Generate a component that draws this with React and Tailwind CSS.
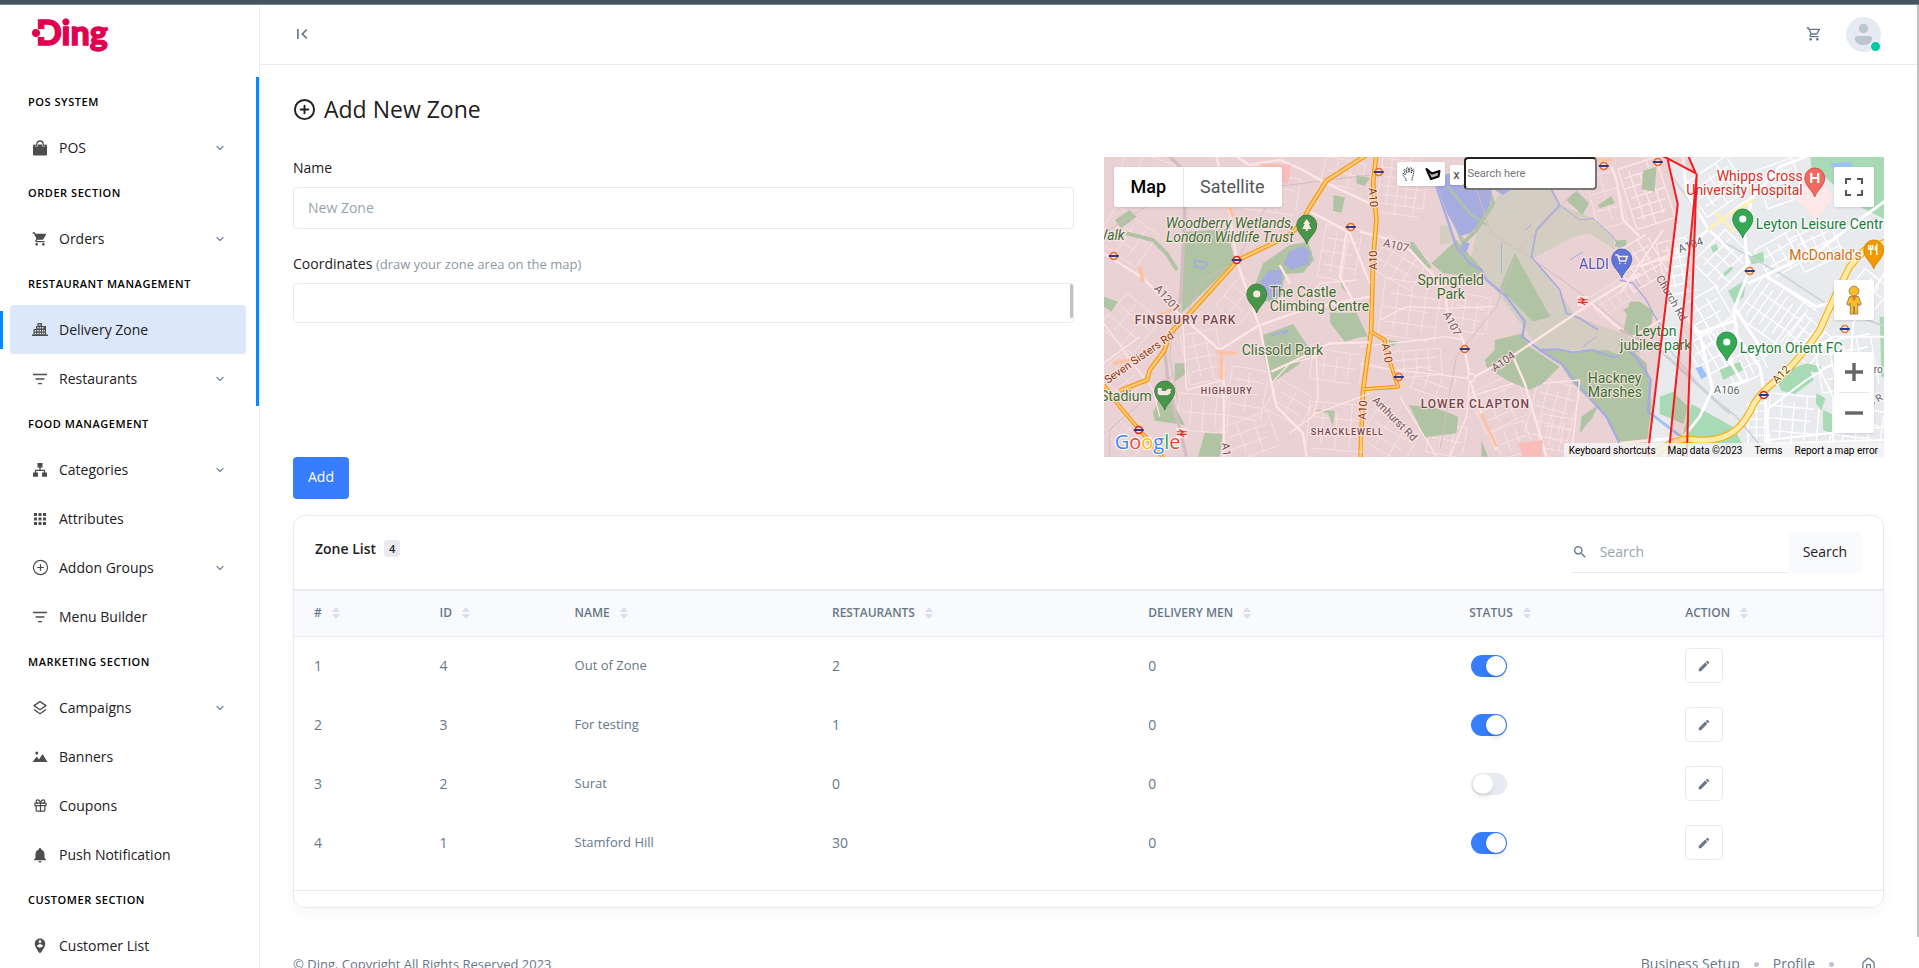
import React from "react";
import { ChevronDown, CirclePlus, Gift, House } from "lucide-react";
import {
  MdApps,
  MdEdit,
  MdFirstPage,
  MdNotifications,
  MdOutlineShoppingCart,
  MdPersonPinCircle,
  MdSearch,
  MdShoppingCart,
} from "react-icons/md";

/* ---------- small drawn icons ---------- */

function CityIcon() {
  return (
    <svg viewBox="0 0 16 16" className="size-4" fill="currentColor">
      <path
        fillRule="evenodd"
        d="M5.500 1h4.500v3h4v8.500h2V14H0v-1.500h1.500V7H4V4h1.500zM6.700 2.200v1.300h2V2.200zM5.200 5v1.500h1.400V5zm2.400 0v1.500H9V5zm2.400 0v1.500h1.400V5zM2.700 8v1.500h1.400V8zm2.500 0v1.500h1.400V8zm2.400 0v1.500H9V8zM10 8v1.500h1.400V8zm2.200 0v1.500h.8V8zM2.700 10.700v1.500h1.400v-1.500zm2.500 0v1.500h1.400v-1.500zm2.400 0v1.500H9v-1.500zm2.400 0v1.500h1.400v-1.500zm2.200 0v1.500h.8v-1.500z"
      />
    </svg>
  );
}

function BagIcon() {
  return (
    <svg viewBox="0 0 16 16" className="size-4">
      <rect x="1" y="4.500" width="14" height="11" rx="1.300" fill="currentColor" />
      <path d="M4.800 7V4.200a3.200 3.200 0 0 1 6.400 0V7" fill="none" stroke="#fff" strokeWidth="2.400" />
      <path d="M4.800 7.500V4.200a3.200 3.200 0 0 1 6.400 0v3.300" fill="none" stroke="currentColor" strokeWidth="1.300" />
    </svg>
  );
}

function TreeIcon() {
  return (
    <svg viewBox="0 0 16 16" className="size-4" fill="currentColor">
      <path d="M5.500 1h5v4.600h-5zM1 10.500h5v4.300H1zM10 10.500h5v4.300h-5z" />
      <path d="M8 5v3M3.500 11V8.300h9V11" fill="none" stroke="currentColor" strokeWidth="1.300" />
    </svg>
  );
}

function LinesIcon() {
  return (
    <svg viewBox="0 0 16 16" className="size-4" stroke="currentColor" strokeWidth="1.300" strokeLinecap="round">
      <path d="M1.500 3.500h13M4 8h8M6.500 12.700h3" />
    </svg>
  );
}

function LayersIcon() {
  return (
    <svg viewBox="0 0 16 16" className="size-4" fill="none" stroke="currentColor" strokeWidth="1.300" strokeLinejoin="round">
      <path d="M8 1.600l6 4-6 4.200-6-4.200z" />
      <path d="M2 9.400l6 4.400 6-4.400" />
    </svg>
  );
}

function MountainsIcon() {
  return (
    <svg viewBox="0 0 16 16" className="size-4" fill="currentColor">
      <circle cx="4.800" cy="4" r="1.500" />
      <path d="M.5 13L4.700 7.500 7 10.400 10.500 5 15.500 13z" />
    </svg>
  );
}

function SortIcon() {
  return (
    <svg viewBox="0 0 8 12" className="h-3 w-2" fill="#dde0ec">
      <path d="M4 .5c.7 0 4 3.800 3.700 4.600H.3C0 4.300 3.300.5 4 .5zM4 11.500c.7 0 4-3.800 3.700-4.600H.3c-.3.800 3 4.600 3.700 4.600z" />
    </svg>
  );
}

function Logo() {
  return (
    <svg viewBox="0 0 78 44" className="h-11 w-[78px] overflow-visible" role="img" aria-label="Ding">
      <text x="4" y="28" fontFamily="Lato" fontWeight="900" fontSize="34" fill="#e10050" stroke="#e10050" strokeWidth="1.300">
        Ding
      </text>
      <rect x="2" y="12" width="15" height="8" rx="4" fill="#fff" />
      <circle cx="4" cy="16" r="4" fill="#e10050" />
    </svg>
  );
}

/* ---------- sidebar ---------- */

const sections = [
  { title: "Pos System", items: [{ label: "POS", icon: <BagIcon />, more: true }] },
  { title: "Order Section", items: [{ label: "Orders", icon: <MdShoppingCart />, more: true }] },
  {
    title: "Restaurant Management",
    items: [
      { label: "Delivery Zone", icon: <CityIcon />, active: true },
      { label: "Restaurants", icon: <LinesIcon />, more: true },
    ],
  },
  {
    title: "Food Management",
    items: [
      { label: "Categories", icon: <TreeIcon />, more: true },
      { label: "Attributes", icon: <MdApps className="size-[18px]" /> },
      { label: "Addon Groups", icon: <CirclePlus size={17} strokeWidth={1.7} />, more: true },
      { label: "Menu Builder", icon: <LinesIcon /> },
    ],
  },
  {
    title: "Marketing Section",
    items: [
      { label: "Campaigns", icon: <LayersIcon />, more: true },
      { label: "Banners", icon: <MountainsIcon /> },
      { label: "Coupons", icon: <Gift size={15} strokeWidth={2} /> },
      { label: "Push Notification", icon: <MdNotifications className="size-[18px]" /> },
    ],
  },
  { title: "Customer Section", items: [{ label: "Customer List", icon: <MdPersonPinCircle className="size-[18px]" /> }] },
];

function Sidebar() {
  return (
    <aside className="relative flex w-[260px] shrink-0 flex-col overflow-hidden border-r border-[#e7eaf3] bg-white">
      <a href="#home" className="flex h-[76px] shrink-0 items-start pt-3 pl-8">
        <Logo />
      </a>
      <nav className="text-sm text-[#1e2022]">
        {sections.map((s) => (
          <section key={s.title}>
            <h2 className="flex h-[42px] items-center pl-7 text-[11px] font-semibold tracking-wider text-black uppercase">
              {s.title}
            </h2>
            {s.items.map((it) => (
              <div key={it.label} className="relative">
                {it.active && <span className="absolute top-1.5 left-0 h-[38px] w-[3px] bg-[#008cff]" />}
                <a
                  href="#nav"
                  className={
                    it.active
                      ? "mr-[13px] ml-2.5 flex h-[49px] items-center rounded bg-[#dce8fa] pr-[18px] pl-[21px]"
                      : "mr-[13px] ml-2.5 flex h-[49px] items-center rounded pr-[18px] pl-[21px]"
                  }
                >
                  <span className="mr-2.5 flex w-[18px] justify-center text-base text-[#4d4d4d]">{it.icon}</span>
                  <span className="grow">{it.label}</span>
                  {it.more && <ChevronDown size={12} strokeWidth={2.600} className="mr-[2px] text-[#7b8ba1]" />}
                </a>
              </div>
            ))}
          </section>
        ))}
      </nav>
      <span className="absolute top-[72px] right-0 h-[329px] w-[3px] bg-[#008cff]" />
    </aside>
  );
}

/* ---------- map ---------- */

// Street texture: a rotated grid of w × h around (cx, cy).
function grid(cx, cy, w, h, deg, nx, ny) {
  const a = (deg * Math.PI) / 180;
  const p = (x, y) =>
    `${Math.round(cx + x * Math.cos(a) - y * Math.sin(a))},${Math.round(cy + x * Math.sin(a) + y * Math.cos(a))}`;
  let d = "";
  for (let i = 0; i <= nx; i++) {
    const x = -w / 2 + (w * i) / nx;
    d += `M${p(x, -h / 2 + (i % 3) * h * 0.08)}L${p(x, h / 2 - (i % 2) * h * 0.12)}`;
  }
  for (let j = 0; j <= ny; j++) {
    const y = -h / 2 + (h * j) / ny;
    d += `M${p(-w / 2 + (j % 2) * w * 0.1, y)}L${p(w / 2 - (j % 3) * w * 0.08, y)}`;
  }
  return d;
}

const streetsWest = [
  grid(110, 260, 150, 120, 35, 4, 3),
  grid(190, 80, 200, 110, 20, 4, 2),
  grid(120, 520, 130, 130, 40, 3, 3),
  grid(100, 680, 110, 90, 50, 3, 2),
  grid(340, 620, 110, 150, -12, 3, 4),
  grid(340, 790, 150, 110, 5, 4, 2),
  grid(470, 730, 110, 150, 10, 2, 4),
  grid(480, 860, 150, 110, -20, 3, 3),
  grid(600, 760, 100, 120, -60, 3, 2),
  grid(740, 650, 150, 90, 8, 4, 2),
  grid(740, 830, 170, 140, 5, 4, 3),
  grid(750, 310, 110, 160, 10, 3, 4),
  grid(540, 130, 170, 110, 8, 3, 3),
  grid(450, 450, 90, 120, 40, 2, 3),
  grid(760, 70, 120, 80, 12, 3, 2),
  grid(120, 860, 100, 90, 45, 3, 3),
].join("");

const streetsMid = [
  grid(130, 100, 140, 190, 8, 5, 7),
  grid(120, 340, 140, 110, 30, 4, 3),
  grid(150, 480, 170, 170, 8, 4, 4),
  grid(330, 490, 110, 110, 10, 3, 3),
  grid(170, 640, 150, 80, -5, 4, 3),
  grid(220, 700, 120, 70, 20, 3, 2),
  grid(90, 860, 150, 100, 30, 3, 3),
  grid(260, 870, 110, 90, 10, 3, 2),
  grid(420, 760, 150, 130, -25, 3, 4),
  grid(580, 780, 130, 170, 15, 4, 4),
  grid(460, 870, 100, 90, -20, 3, 2),
  grid(760, 440, 130, 70, -32, 5, 2),
  grid(740, 150, 90, 160, -15, 2, 3),
  grid(590, 850, 100, 100, 10, 3, 3),
].join("");

const streetsEast = [
  grid(80, 130, 120, 190, -18, 4, 6),
  grid(60, 340, 120, 130, -30, 4, 4),
  grid(170, 350, 90, 160, -12, 3, 6),
  grid(290, 110, 150, 120, -35, 4, 4),
  grid(310, 330, 120, 140, 45, 4, 4),
  grid(480, 100, 120, 120, -20, 3, 4),
  grid(490, 310, 140, 100, -30, 4, 3),
  grid(470, 490, 190, 150, 35, 8, 3),
  grid(270, 500, 140, 120, 60, 4, 3),
  grid(270, 610, 100, 110, -30, 4, 3),
  grid(380, 650, 110, 80, -25, 5, 2),
  grid(560, 570, 110, 110, 40, 4, 3),
  grid(520, 810, 150, 150, 5, 4, 4),
  grid(680, 640, 170, 150, -10, 4, 4),
  grid(710, 840, 150, 130, 8, 4, 3),
  grid(590, 290, 130, 110, -25, 4, 4),
  grid(740, 430, 100, 110, 40, 3, 3),
  grid(410, 820, 50, 120, 0, 2, 5),
].join("");

const PARK = "#a8dab5";
const WATER = "#9cc0f9";

function Highway({ d, w = 7 }) {
  return (
    <g fill="none" strokeLinejoin="round">
      <path d={d} stroke="#f9ab00" strokeWidth={w + 7} />
      <path d={d} stroke="#fde293" strokeWidth={w} />
    </g>
  );
}

function Label({ x, y, children, size = 14, fill = "#1c7f3c", anchor = "start", rot, ...rest }) {
  return (
    <text
      x={x}
      y={y}
      fontSize={size}
      fill={fill}
      textAnchor={anchor}
      transform={rot ? `rotate(${rot} ${x} ${y})` : undefined}
      stroke="#fff"
      strokeOpacity="0.8"
      strokeWidth="2.500"
      strokeLinejoin="round"
      paintOrder="stroke"
      {...rest}
    >
      {children}
    </text>
  );
}

function Pin({ x, y, fill = "#34a853", dark = "#1e7e3a", children }) {
  return (
    <g transform={`translate(${x} ${y})`}>
      <path
        d="M0 0C-1.500-6-10-11-10-19A10 10 0 0 1 10-19C10-11 1.500-6 0 0z"
        fill={fill}
        stroke={dark}
        strokeWidth="0.800"
      />
      {children || <circle cy="-19" r="3.600" fill="#fff" />}
    </g>
  );
}

function Station({ x, y, color = "#ee7623" }) {
  return (
    <g transform={`translate(${x} ${y})`}>
      <circle r="3.500" fill="#fff" stroke={color} strokeWidth="1.700" />
      <rect x="-5" y="-1" width="10" height="2" fill="#1c3f94" />
    </g>
  );
}

function Rail({ x, y }) {
  return (
    <g transform={`translate(${x} ${y})`}>
      <rect x="-5.500" y="-5" width="11" height="10" rx="1" fill="#fff" />
      <path d="M-5-1.200H5M-5 1.400H5M-2.500-3.500L2-1.200-2 1.400 2.500 3.800" fill="none" stroke="#e0352b" strokeWidth="1.100" />
    </g>
  );
}

function MapDrawing() {
  const road = "#5f6368";
  const brown = "#7a3d0c";
  return (
    <svg
      viewBox="0 0 781 300"
      preserveAspectRatio="xMidYMid slice"
      className="absolute inset-0 size-full"
      fontFamily="Roboto, sans-serif"
      aria-label="Zone map"
    >
      <rect width="781" height="300" fill="#e8eaed" />

      {/* middle */}
      <g transform="translate(256 -7) scale(0.33333)" fill="none">
        <path stroke="#fff" strokeOpacity="0.7" strokeWidth="3" d={streetsMid} />
        <path
          fill="#d0e6d9"
          d="M395 170L440 90 570 110 600 165 690 200 760 255 765 300 690 250 640 262 520 325 600 430 650 500 840 570 840 640 700 600 540 600 490 530 400 410 330 340 350 250zM240 225L275 230 285 275 240 285z"
        />
        <path
          fill={PARK}
          d="M215 340L290 270 370 360 350 380 250 370zM465 310L572 500 520 515 420 415zM530 595L640 605 740 600 840 640V880L780 875 740 800 640 700 600 640zM375 630L405 600 405 570 490 550 510 590 600 650 550 700 510 720 440 690 380 650zM148 765L230 775 295 800 290 850 195 862zM620 150L650 122 688 160 668 195zM715 165L755 138 765 160 720 175zM790 480L840 455V540L800 545 815 510zM0 530L25 560H0zM665 800L715 765 700 800 660 850zM365 870L385 920H365zM140 280L160 275 215 350 205 360zM0 80L25 80 0 105zM770 270l30 5-5 15h-30zM85 570l35 5-30 18z"
        />
        <path stroke={PARK} strokeWidth="12" d="M240 90L310 280 350 240 400 160 385 110" />
        <path fill={WATER} d="M225 85L300 60 400 60 390 165 350 230 330 250 300 258 262 190zM310 275l20 5-10 28-18-8zM400 90L460 115 430 135 405 120z" />
        <path stroke={PARK} strokeWidth="7" d="M265 110L330 190 380 225" />
        <g stroke={WATER} strokeWidth="7">
          <path d="M230 110L290 290 330 340 365 360 380 390 440 440 495 515 488 560 540 600 610 645 650 700 740 800 790 900" />
          <path strokeWidth="5" d="M570 110L600 165 530 240 515 320 600 420 620 490 660 505 715 540" />
          <path strokeWidth="6" d="M540 600L590 598 640 607 700 600 760 622 840 600" />
          <path strokeWidth="3" d="M600 165L660 210 700 205 760 260 790 310 840 410M495 240L515 225M630 330l40-25M425 280v90M670 590l40-30" />
        </g>
        <g stroke="#cfd2d8" strokeWidth="3">
          <path d="M350 120L395 250 530 335 690 450 840 570M640 130L470 310 410 470 290 620 240 900" />
        </g>
        <g stroke="#fff" strokeWidth="7" strokeLinejoin="round">
          <path d="M0 245L70 262 150 300 220 375 258 440 262 480 310 570 330 680 345 740 410 900" />
          <path d="M335 685L400 650 470 610 700 455 840 370M460 620L495 700 560 920M690 455L760 520 840 580M755 50L770 90 790 210 840 260" />
          <path strokeWidth="4" d="M330 685L320 800 270 920M0 590L90 580 180 570 260 560 310 570M0 640L100 660 200 670 330 685M120 740L200 870 230 920M60 510L140 470 250 475 400 470M330 740L460 700M550 700L660 690 650 780 640 880" />
        </g>
        <circle cx="335" cy="683" r="11" fill="#e8eaed" stroke="#fff" strokeWidth="5" />
        <path fill="#fad2cf" d="M475 880L550 870 545 920H490z" />
        <path stroke="#fdd9b5" strokeWidth="9" d="M365 790L410 890M700 30h60" />
        <Highway d="M50 10L40 100 50 210 40 330 34 545 10 720 2 930" />
        <Highway w={5} d="M34 545L75 570 82 610 115 710 10 718" />
      </g>

      {/* west */}
      <g transform="translate(-14 -7) scale(0.33333)" fill="none">
        <path stroke="#fff" strokeOpacity="0.7" strokeWidth="3" d={streetsWest} />
        <path
          fill={PARK}
          d="M285 245L410 238 430 310 438 332 275 490zM498 400L520 340 600 285 655 275 672 330 640 368 590 372 560 450 520 455zM520 555L610 522 662 600 625 645 545 700 522 620zM75 210L120 180 140 200 95 235zM190 790L205 750 240 740 285 825 195 812zM345 848L400 852 390 920 325 920zM732 135L766 142 755 188 730 182zM720 488L800 488 832 555 765 575 722 520zM670 780L735 782 730 830 715 790zM42 440L85 455 65 485 42 470zM255 640L290 640 290 670 255 695zM750 375L770 430 755 410zM800 75L840 85 825 108 800 100z"
        />
        <path stroke={PARK} strokeWidth="12" d="M110 250L190 270 230 310 262 360" />
        <path fill={WATER} stroke={PARK} strokeWidth="5" d="M578 340L598 302 640 285 664 305 658 345 605 362zM508 392L540 358 580 355 575 435 540 455z" />
        <path stroke={WATER} strokeWidth="5" d="M315 330l20 5 20 5-15 15-25-5zM545 555l25-8 25-5-15 12" />
        <g stroke="#cfd2d8">
          <path strokeWidth="10" d="M240 20L280 60 285 190 275 400 265 520 225 600 235 700 290 920" />
          <path strokeWidth="3" d="M42 250L280 100 350 60M295 480L340 390 440 335 560 110 840 75M60 920V840L290 640M250 500L240 620 265 760" />
        </g>
        <g stroke="#fff" strokeWidth="7" strokeLinejoin="round">
          <path d="M42 310L160 385 260 485 300 520 395 605 402 710 402 920" />
          <path d="M380 20L420 190 440 330 512 540 545 700 560 770 640 850 650 920" />
          <path d="M390 600L500 530 640 480 840 440M440 20L480 45 570 30 640 60 700 95 840 160M650 180L720 215 780 250 840 400M545 665L620 630 720 580 840 577M570 345L600 400M770 250L750 380 800 470" />
          <path strokeWidth="4" d="M545 700L600 640 680 620 685 740 670 800M42 520L190 720 210 800M280 520L290 720 400 690M600 850L680 790 840 730M42 640L150 560M670 430L690 400 800 390" />
        </g>
        <path fill="#fad2cf" d="M510 40l95 5-10 55-50-10z" />
        <path stroke="#fdd9b5" strokeWidth="11" d="M200 500L270 470M150 350L160 395M395 600v90M70 640l60-10M410 150l20 50M380 605l60 5" />
        <Highway d="M830 15L710 92 655 180 Q625 250 560 275L445 330 300 490 240 550 225 600 180 660 172 690 90 722" />
        <Highway w={5} d="M42 705L90 770 150 840 222 925" />
      </g>

      {/* east */}
      <g transform="translate(516 -7) scale(0.33333)" fill="none">
        <path stroke="#fff" strokeWidth="4" d={streetsEast} />
        <path
          fill={PARK}
          d="M572 20H800V210L720 170 690 150 620 85 575 55zM70 62L110 50 105 125 66 118zM0 570L80 640 96 770 80 885H0zM30 455L60 455 100 482 95 530 50 570 12 540 20 500zM215 762L340 830 370 885H180zM120 740L160 725 205 770 192 822 120 792zM465 675L560 640 582 690 525 732 485 722zM325 422L378 390 372 440 345 462zM390 320L430 305 433 335 395 343zM590 730L617 745 605 782 588 760zM610 780L655 800 640 852 610 840zM310 370l25-22 5 8-25 24zM272 290l18-8 5 18-15 8zM300 660L360 635 370 660 310 690zM780 500h20v180h-15zM0 270h20v15H0zM560 640l45 10-5 18-40-5z"
        />
        <path fill={WATER} d="M632 40l60-5 10 25-50 15zM700 90l30-5 10 20-25 5zM228 655L245 648 262 678 245 688z" />
        <path fill="#fce8e6" d="M525 145L590 85 642 140 590 212z" />
        <path stroke={WATER} strokeWidth="8" d="M0 580Q60 620 92 690L85 785 210 880" />
        <path stroke={WATER} strokeWidth="4" d="M0 390L40 400 80 450 100 490 125 530" />
        <g stroke="#cfd2d8">
          <path strokeWidth="5" d="M150 70L250 210 300 270 480 370 640 475 800 530M150 600L250 720 350 800 440 910" />
          <path strokeWidth="9" d="M0 540L120 600 230 700 330 790" />
        </g>
        <g stroke="#fff" strokeWidth="9" strokeLinejoin="round">
          <path d="M60 350L190 300 270 235 330 190 400 140 480 50 560 20M190 20L200 130 265 235 330 300" />
          <path d="M0 880L190 862 240 800 275 725 385 690M140 440L170 470 240 550 280 725" />
          <path d="M395 150L375 250 385 370 342 480 352 560 420 650 436 740 450 920M385 400L600 300 690 230 800 150M240 548L350 510M342 470L440 620M440 380L590 470 700 440M280 550L370 700" />
          <path strokeWidth="6" d="M440 780L560 690 640 640M580 600L640 560 800 560M590 640L640 740 640 880M445 870L800 830M0 430L130 240M40 560L140 500M690 700L700 520 800 360M440 920L470 880 800 870" />
        </g>
        <path stroke="#fef0b8" strokeWidth="10" d="M265 240L310 205 400 150M285 188L345 245" />
        <g fill="none">
          <path stroke="#f9ab00" strokeWidth="21" d="M92 925Q150 870 200 867 300 882 350 838 380 812 402 762 420 730 480 682 560 605 600 540L650 430 690 350 735 300 800 275" />
          <path stroke="#ffeba8" strokeWidth="15" d="M92 925Q150 870 200 867 300 882 350 838 380 812 402 762 420 730 480 682 560 605 600 540L650 430 690 350 735 300 800 275" />
        </g>
      </g>

      {/* area names */}
      <g fontStyle="italic">
        <Label x={190} y={71} anchor="end">Woodberry Wetlands,</Label>
        <Label x={190} y={85} anchor="end">London Wildlife Trust</Label>
        <Label x={21} y={83} anchor="end">Walk</Label>
      </g>
      <Label x={166} y={140}>The Castle</Label>
      <Label x={166} y={154}>Climbing Centre</Label>
      <Label x={138} y={198}>Clissold Park</Label>
      <Label x={48} y={244} anchor="end">Stadium</Label>
      <Label x={347} y={128} anchor="middle">Springfield</Label>
      <Label x={347} y={142} anchor="middle">Park</Label>
      <Label x={552} y={179} anchor="middle">Leyton</Label>
      <Label x={552} y={193} anchor="middle">jubilee park</Label>
      <Label x={484} y={226}>Hackney</Label>
      <Label x={484} y={240}>Marshes</Label>
      <Label x={652} y={72}>Leyton Leisure Centr</Label>
      <Label x={636} y={196}>Leyton Orient FC</Label>
      <Label x={699} y={24} anchor="end" fill="#d93025">Whipps Cross</Label>
      <Label x={699} y={38} anchor="end" fill="#d93025">University Hospital</Label>
      <Label x={758} y={103} anchor="end" fill="#d56e0c">McDonald's</Label>
      <Label x={505} y={112} anchor="end" fill="#3367d6">ALDI</Label>
      <g fontWeight="500" letterSpacing="1">
        <Label x={31} y={167} size={12} fill="#5f5358">FINSBURY PARK</Label>
        <Label x={317} y={251} size={12} fill="#5f5358">LOWER CLAPTON</Label>
        <Label x={97} y={237} size={9} fill="#5f5358">HIGHBURY</Label>
        <Label x={207} y={278} size={9} fill="#5f5358">SHACKLEWELL</Label>
      </g>

      {/* road names */}
      <Label x={50} y={132} size={11} fill={road} rot={48}>A1201</Label>
      <Label x={4} y={227} size={11} fill={brown} rot={-35}>Seven Sisters Rd</Label>
      <Label x={265} y={31} size={11} fill={brown} rot={86}>A10</Label>
      <Label x={273} y={113} size={11} fill={brown} rot={-90}>A10</Label>
      <Label x={278} y={187} size={11} fill={brown} rot={80}>A10</Label>
      <Label x={262} y={263} size={11} fill={brown} rot={-86}>A10</Label>
      <Label x={279} y={89} size={11} fill={road} rot={14}>A107</Label>
      <Label x={339} y={157} size={11} fill={road} rot={62}>A107</Label>
      <Label x={391} y={215} size={11} fill={road} rot={-35}>A104</Label>
      <Label x={268} y={244} size={11} fill={road} rot={45}>Amhurst Rd</Label>
      <Label x={118} y={286} size={11} fill={road} rot={84}>A1</Label>
      <Label x={576} y={96} size={11} fill={road} rot={-20}>A104</Label>
      <Label x={552} y={121} size={11} fill={road} rot={60}>Church Rd</Label>
      <Label x={610} y={236} size={11} fill={road} rot={3}>A106</Label>
      <Label x={673} y={227} size={11} fill={brown} rot={-45}>A12</Label>
      <Label x={770} y={216} size={10} fill={road}>ro</Label>
      <Label x={770} y={248} size={10} fill={road} rot={-30}>l R</Label>

      <Station x={133} y={103} color="#dc241f" />
      <Station x={247} y={70} />
      <Station x={10} y={99} />
      <Station x={35} y={273} color="#dc241f" />
      <Station x={275} y={15} />
      <Station x={500} y={9} />
      <Station x={361} y={192} />
      <Station x={295} y={220} />
      <Station x={554} y={5} />
      <Station x={646} y={114} />
      <Station x={741} y={172} />
      <Station x={660} y={238} color="#dc241f" />
      <Rail x={78} y={276} />
      <Rail x={479} y={144} />

      <Pin x={203} y={87}>
        <path d="M0-25L3.500-20H2L4.500-15H1v2h-2v-2h-3.500L-2-20h-1.500z" fill="#fff" />
      </Pin>
      <Pin x={153} y={156} />
      <Pin x={61} y={253}>
        <path d="M-7-22h4v3h4q3-4 6-1l-2 1q2 1 0 3-3 2-6 1-4 1-6-1z" fill="#fff" />
      </Pin>
      <Pin x={518} y={121} fill="#4b84f0" dark="#2f62cc">
        <path d="M-6-23h2l2 6h6l1.500-4.500H-3M-2-14.500h.1M3.500-14.500h.1" fill="none" stroke="#fff" strokeWidth="1.600" strokeLinecap="round" />
      </Pin>
      <Pin x={711} y={40} fill="#ef6b62" dark="#d0433a">
        <path d="M-3.500-24v10M3.500-24v10M-3.500-19h7" stroke="#fff" strokeWidth="2.200" />
      </Pin>
      <Pin x={639} y={81} />
      <Pin x={623} y={204} />
      <Pin x={770} y={112} fill="#f29900" dark="#d07b00">
        <path d="M-3-24v10M-5-24v4h4v-4M3-14v-10q-2 2-1.500 5.500" fill="none" stroke="#fff" strokeWidth="1.400" />
      </Pin>

      {/* zone outline */}
      <g transform="translate(516 -7) scale(0.33333)">
        <path fill="#f00" fillOpacity="0.1" d="M-1560 0H130L143 25 174 163 85 925H-1560zM231 72L215 240 146 925H202L206 760zM143 25L125 10H200L225 70z" />
        <g fill="none" stroke="#f8191c" strokeWidth="6">
          <path d="M115 12L143 25 174 163 88 880 85 925M143 25L228 70 202 10M231 72L215 240 152 860 146 925M231 72L206 760 201 925" />
        </g>
      </g>

      <text x="11" y="292" fontSize="20" fontFamily="'Open Sans'" fontWeight="500" stroke="#fff" strokeWidth="2" paintOrder="stroke">
        <tspan fill="#4285f4">G</tspan>
        <tspan fill="#ea4335">o</tspan>
        <tspan fill="#fbbc05">o</tspan>
        <tspan fill="#4285f4">g</tspan>
        <tspan fill="#34a853">l</tspan>
        <tspan fill="#ea4335">e</tspan>
      </text>
    </svg>
  );
}

function ZoneMap() {
  const box = "flex size-10 items-center justify-center rounded-xs bg-white text-[#666] shadow";
  return (
    <div className="relative h-[300px] overflow-hidden bg-[#e8eaed] font-[Roboto,sans-serif]">
      <MapDrawing />
      <div className="absolute top-2.5 left-2.5 flex h-10 rounded-xs bg-white text-lg shadow">
        <button type="button" className="border-r border-[#e6e6e6] px-[17px] font-medium text-black">Map</button>
        <button type="button" className="pr-[17px] pl-4 text-[#565656]">Satellite</button>
      </div>

      <div className="absolute top-0 left-[293px] flex items-start">
        <div className="mt-[5px] flex rounded-xs bg-white shadow">
          <button type="button" aria-label="Move map" className="flex size-6 items-center justify-center">
            <svg viewBox="0 0 16 16" className="size-4" fill="none" stroke="#333" strokeWidth="0.900" strokeDasharray="1.500 0.500">
              <path d="M5 15v-2L1.500 8.500q0-1.500 1.500-1l1.500 1.500L2.800 4q.7-1.500 1.700 0l1.300 3L5.700 2q1-1.300 1.700 0l.5 4.500L9 2q1.200-1 1.500.3l-.3 4.900 1.500-3.700q1.300-.6 1.300.7L12 10l-1 3v2" />
            </svg>
          </button>
          <button type="button" aria-label="Draw a shape" className="flex size-6 items-center justify-center">
            <svg viewBox="0 0 16 16" className="size-4" fill="#b5b5b5" stroke="#000" strokeWidth="2" strokeLinejoin="round">
              <path d="M1.500 3l5.500 4.500 7.500-2.500-1 5.500L6 13z" />
            </svg>
          </button>
        </div>
        <button type="button" aria-label="Clear shape" className="mt-2 ml-[5px] h-5 w-3.5 rounded-xs bg-white text-[13px] leading-5 text-[#444] shadow">x</button>
        <input
          type="text"
          aria-label="Search here"
          placeholder="Search here"
          className="h-[33px] w-[133px] rounded border-2 border-[#222] border-r-[#767676] border-b-[#767676] bg-white px-0.5 text-[11px] placeholder:text-[#757575]"
        />
      </div>

      <div className="absolute top-2.5 right-2.5 flex flex-col">
        <button type="button" aria-label="Full screen" className={box}>
          <svg viewBox="0 0 18 18" className="size-[18px]" fill="none" stroke="#555" strokeWidth="2">
            <path d="M1 6V1h5M12 1h5v5M17 12v5h-5M6 17H1v-5" />
          </svg>
        </button>
        <button type="button" aria-label="Street View" className={`mt-[73px] ${box}`}>
          <svg viewBox="0 0 20 32" className="h-[30px] w-5" fill="#fbbc2c" stroke="#7a6a3a" strokeWidth="0.800" strokeLinejoin="round">
            <path d="M5 12.500q5-1.500 10 0l2.800 8-2.300 1.500-1.500-2.500V31h-3.500v-8h-1v8H6V19.500L4.500 22l-2.300-1.500z" />
            <path d="M7.500 13h5L10 17z" fill="#e2711d" stroke="none" />
            <circle cx="10" cy="6.500" r="5.200" />
          </svg>
        </button>
        <div className="mt-8 flex flex-col items-center rounded-xs bg-white shadow">
          <button type="button" aria-label="Zoom in" className="flex size-10 items-center justify-center">
            <svg viewBox="0 0 18 18" className="size-[18px]" fill="#666">
              <path d="M7.300 0h3.400v7.300H18v3.400h-7.300V18H7.300v-7.300H0V7.300h7.300z" />
            </svg>
          </button>
          <span className="h-px w-[30px] bg-[#e6e6e6]" />
          <button type="button" aria-label="Zoom out" className="flex size-10 items-center justify-center">
            <svg viewBox="0 0 18 18" className="size-[18px]" fill="#666">
              <path d="M0 7.300h18v3.400H0z" />
            </svg>
          </button>
        </div>
      </div>

      <div className="absolute right-0 bottom-0 flex h-3.5 items-center gap-3 bg-[#f5f5f5]/80 pr-1.5 pl-[5px] text-[10px] text-black">
        <button type="button">Keyboard shortcuts</button>
        <span>Map data ©2023</span>
        <a href="#terms">Terms</a>
        <a href="#report">Report a map error</a>
      </div>
    </div>
  );
}

/* ---------- table ---------- */

const columns = [
  { title: "#", width: "w-[7.900%]" },
  { title: "ID", width: "w-[8.500%]" },
  { title: "Name", width: "w-[16.200%]" },
  { title: "Restaurants", width: "w-[19.900%]" },
  { title: "Delivery Men", width: "w-[20.200%]" },
  { title: "Status", width: "w-[13.600%]" },
  { title: "Action", width: "w-[13.700%]" },
];

const zones = [
  { id: 4, name: "Out of Zone", restaurants: 2, men: 0, on: true },
  { id: 3, name: "For testing", restaurants: 1, men: 0, on: true },
  { id: 2, name: "Surat", restaurants: 0, men: 0, on: false },
  { id: 1, name: "Stamford Hill", restaurants: 30, men: 0, on: true },
];

function Toggle({ on, label }) {
  return (
    <label className="relative ml-0.5 block h-[22px] w-9">
      <input type="checkbox" defaultChecked={on} aria-label={label} className="peer sr-only" />
      <span className="block h-full rounded-full bg-[#e7eaf3] peer-checked:bg-[#377dff]" />
      <span className="absolute top-px left-0.5 size-5 rounded-full bg-white shadow-md peer-checked:left-[15px]" />
    </label>
  );
}

function ZoneTable() {
  return (
    <table className="w-full table-fixed border-collapse text-left text-[#677788]">
      <thead>
        <tr className="h-[46px] border-t-2 border-b border-[#e7eaf3] bg-[#f8fafd]">
          {columns.map((c) => (
            <th key={c.title} className={`pl-5 text-xs font-semibold uppercase ${c.width}`}>
              <span className="flex items-center gap-2.5">
                {c.title}
                <SortIcon />
              </span>
            </th>
          ))}
        </tr>
      </thead>
      <tbody className="text-sm">
        {zones.map((z, i) => (
          <tr key={z.id} className="h-[59px]">
            <td className="pl-5">{i + 1}</td>
            <td className="pl-5">{z.id}</td>
            <td className="pl-5 text-[13px]">{z.name}</td>
            <td className="pl-5">{z.restaurants}</td>
            <td className="pl-5">{z.men}</td>
            <td className="pl-5">
              <Toggle on={z.on} label={`Status of ${z.name}`} />
            </td>
            <td className="pl-5">
              <button
                type="button"
                aria-label={`Edit ${z.name}`}
                className="flex h-[35px] w-[38px] items-center justify-center rounded border border-[#e7eaf3] text-sm"
              >
                <MdEdit />
              </button>
            </td>
          </tr>
        ))}
      </tbody>
    </table>
  );
}

/* ---------- page ---------- */

function Header() {
  return (
    <header className="flex h-[60px] shrink-0 items-center border-b border-[#e7eaf3] pr-9 pb-px pl-8 text-[#677788]">
      <button type="button" aria-label="Collapse menu" className="flex size-5 items-center justify-center text-xl">
        <MdFirstPage />
      </button>
      <button type="button" aria-label="Cart" className="ml-auto text-base">
        <MdOutlineShoppingCart />
      </button>
      <button type="button" aria-label="Account" className="relative ml-6 size-[35px]">
        <svg viewBox="0 0 35 35" className="size-full">
          <circle cx="17.500" cy="17.500" r="17.500" fill="#e7eaf3" />
          <g fill="#bdc5d1">
            <circle cx="17.500" cy="11.500" r="4.700" />
            <path d="M8.700 22q0-3 3-3h11.600q3 0 3 3-1.500 6-8.800 6t-8.800-6z" />
          </g>
        </svg>
        <span className="absolute right-0 bottom-0 size-[11px] rounded-full border border-white bg-[#00c9a7]" />
      </button>
    </header>
  );
}

export default function App() {
  return (
    <div className="flex h-screen flex-col overflow-hidden bg-white font-['Open_Sans',sans-serif] text-[#1e2022]">
      <div className="h-[5px] shrink-0 border-b border-[#788790] bg-[#455560]" />
      <div className="flex min-h-0 grow">
        <Sidebar />
        <div className="flex min-w-0 grow flex-col overflow-hidden">
          <Header />
          <main className="shrink-0 px-[33px]">
            <h1 className="flex h-[88px] items-center gap-2 text-[23px] font-medium">
              <CirclePlus size={23} strokeWidth={2} />
              Add New Zone
            </h1>
            <form>
              <div className="mt-1 grid grid-cols-2 gap-[30px]">
                <div className="flex flex-col text-sm">
                  <label htmlFor="name" className="leading-[22px]">Name</label>
                  <input
                    id="name"
                    type="text"
                    placeholder="New Zone"
                    className="mt-2 h-[42px] rounded border border-[#e7eaf3] px-3.5 pb-0.5 placeholder:text-[#97a4af]"
                  />
                  <label htmlFor="coordinates" className="mt-6 leading-[22px]">
                    Coordinates <span className="text-[13px] text-[#8c98a4]">(draw your zone area on the map)</span>
                  </label>
                  <div className="mt-2 flex h-10 rounded border border-[#e7eaf3]">
                    <textarea id="coordinates" className="grow resize-none overflow-hidden px-3.5 py-2" />
                    <span className="mb-1 w-[3px] rounded-xs bg-[#c1c1c1]" />
                  </div>
                </div>
                <ZoneMap />
              </div>
              <button type="submit" className="block h-[42px] rounded bg-[#377dff] px-[15px] pb-0.5 text-sm text-white">
                Add
              </button>
            </form>

            <section className="mt-4 rounded-xl border border-[#e7eaf3] shadow-[0_6px_12px_rgba(140,152,164,0.08)]">
              <div className="flex h-[73px] items-center justify-between px-[21px]">
                <h2 className="mb-2 flex items-center gap-2 text-sm font-semibold">
                  Zone List
                  <span className="rounded bg-[#e9eaee] px-[5px] text-[11px] leading-[17px]">4</span>
                </h2>
                <form className="flex h-[41px] text-sm">
                  <label className="flex w-[216px] items-center border-b border-[#e7eaf3] text-[#677788]">
                    <MdSearch className="mr-3 size-4 shrink-0" />
                    <input
                      type="search"
                      aria-label="Search zones"
                      placeholder="Search"
                      className="w-full min-w-0 outline-none placeholder:text-[#97a4af]"
                    />
                  </label>
                  <button type="submit" className="rounded bg-[#f8fafd] px-[15px] pb-0.5">Search</button>
                </form>
              </div>
              <ZoneTable />
              <div className="mt-[18px] h-[17px] border-t border-[#e7eaf3]" />
            </section>

            <footer className="flex items-center pt-[46px] text-sm text-[#677788]">
              <p className="grow text-[13px]">© Ding. Copyright All Rights Reserved 2023</p>
              <a href="#setup">Business Setup</a>
              <span className="mx-3.5 size-[5px] rounded-full bg-[#bdc5d1]" />
              <a href="#profile">Profile</a>
              <span className="mr-[27px] ml-3.5 size-[5px] rounded-full bg-[#bdc5d1]" />
              <a href="#home" aria-label="Home" className="mr-2">
                <House size={15} />
              </a>
            </footer>
          </main>
        </div>
        <div className="mb-[31px] w-0.5 shrink-0 bg-[#c1c1c1]" />
      </div>
    </div>
  );
}
